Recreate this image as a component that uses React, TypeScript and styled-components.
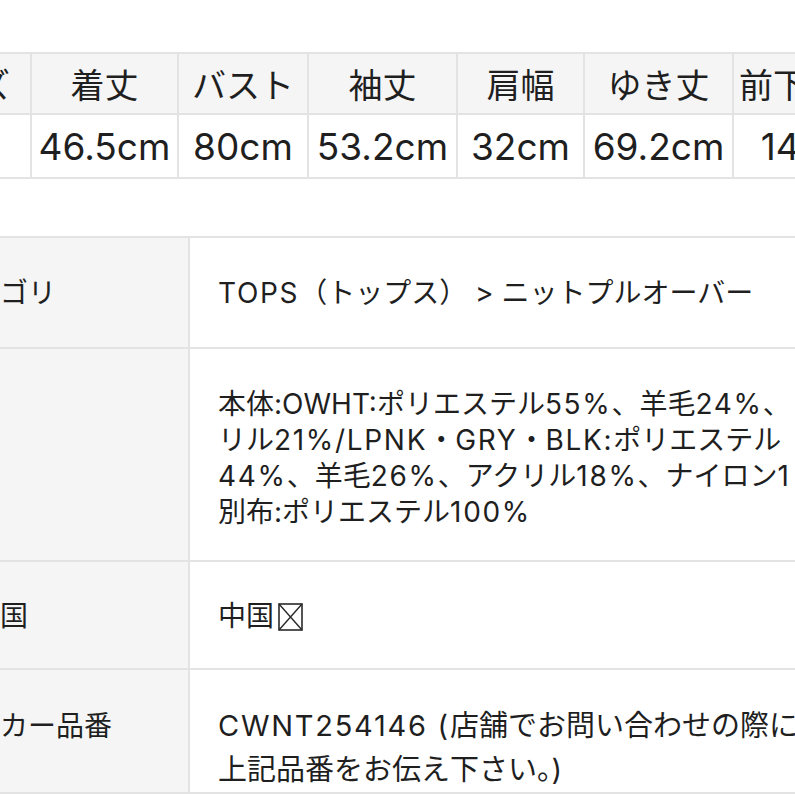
import React from "react";
import styled, { createGlobalStyle } from "styled-components";

const GlobalStyle = createGlobalStyle`
  html, body { margin: 0; padding: 0; background: #ffffff; }
  body {
    overflow: hidden;
    font-family: Inter, "Liberation Sans", "Noto Sans CJK JP", sans-serif;
    color: #1f1f1f;
  }
`;

const Page = styled.main`
  width: 795px;
  height: 795px;
  overflow: hidden;
  background: #fff;
  display: flex;
  flex-direction: column;
  align-items: flex-start;
  padding-top: 52px;
  box-sizing: border-box;
`;

const BORDER = "2px solid #e3e3e3";

const SizeTable = styled.table`
  flex: none;
  border-collapse: collapse;
  table-layout: fixed;
  width: 993px;
  margin-left: -113px;
`;

const SizeHead = styled.th`
  height: 59px;
  padding: 0;
  background: #f5f5f5;
  border: ${BORDER};
  font-weight: 400;
  font-size: 34px;
  text-align: center;
  white-space: nowrap;
`;

const SizeCell = styled.td`
  height: 62px;
  padding: 0;
  background: #fff;
  border: ${BORDER};
  font-size: 37px;
  text-align: center;
  white-space: nowrap;
`;

const DetailTable = styled.table`
  flex: none;
  border-collapse: collapse;
  table-layout: fixed;
  width: 957px;
  margin-left: -86px;
  margin-top: 57px;
`;

const LabelCell = styled.th<{ $h: number; $pt: number }>`
  height: ${(p) => p.$h}px;
  padding: ${(p) => p.$pt}px 28px 0;
  box-sizing: border-box;
  vertical-align: top;
  text-align: left;
  font-weight: 400;
  font-size: 28px;
  line-height: 36px;
  background: #f5f5f5;
  border: ${BORDER};
  white-space: nowrap;
`;

const ValueCell = styled.td<{ $pt: number; $lh: number; $fs?: number }>`
  padding: ${(p) => p.$pt}px 28px 0;
  vertical-align: top;
  text-align: left;
  font-size: ${(p) => p.$fs ?? 28}px;
  line-height: ${(p) => p.$lh}px;
  background: #fff;
  border: ${BORDER};
`;

const Line = styled.span`
  display: block;
  white-space: nowrap;
`;

const Latin = styled.span`
  letter-spacing: 0.06em;
`;

const Tofu = styled.svg`
  width: 25px;
  height: 28px;
  vertical-align: -5px;
  margin-left: 4px;
`;

const sizeHeads = ["サイズ", "着丈", "バスト", "袖丈", "肩幅", "ゆき丈", "前下がり"];
const sizeValues = ["", "46.5cm", "80cm", "53.2cm", "32cm", "69.2cm", "14cm"];
const colWidths = [143, 147, 130, 149, 127, 149, 148];

export default function App() {
  return (
    <>
      <GlobalStyle />
      <Page>
        <SizeTable>
          <colgroup>
            {colWidths.map((w, i) => (
              <col key={i} style={{ width: w }} />
            ))}
          </colgroup>
          <thead>
            <tr>
              {sizeHeads.map((h) => (
                <SizeHead key={h}>{h}</SizeHead>
              ))}
            </tr>
          </thead>
          <tbody>
            <tr>
              {sizeValues.map((v, i) => (
                <SizeCell key={i}>{v}</SizeCell>
              ))}
            </tr>
          </tbody>
        </SizeTable>

        <DetailTable>
          <colgroup>
            <col style={{ width: 274 }} />
            <col style={{ width: 683 }} />
          </colgroup>
          <tbody>
            <tr>
              <LabelCell $h={111} $pt={37}>カテゴリ</LabelCell>
              <ValueCell $pt={37} $lh={36}>
                <Line>
                  <Latin>TOPS</Latin>（トップス） &gt; ニットプルオーバー
                </Line>
              </ValueCell>
            </tr>
            <tr>
              <LabelCell $h={213} $pt={37}>素材</LabelCell>
              <ValueCell $pt={37} $lh={36}>
                <Line>
                  本体:OWHT:ポリエステル<Latin>55%</Latin>、羊毛<Latin>24%</Latin>、
                </Line>
                <Line>
                  リル<Latin>21%/LPNK</Latin>・<Latin>GRY</Latin>・<Latin>BLK:</Latin>ポリエステル
                </Line>
                <Line>
                  <Latin>44%</Latin>、羊毛<Latin>26%</Latin>、アクリル<Latin>18%</Latin>、ナイロン<Latin>1</Latin>
                </Line>
                <Line>
                  別布:ポリエステル<Latin>100%</Latin>
                </Line>
              </ValueCell>
            </tr>
            <tr>
              <LabelCell $h={108} $pt={36}>原産国</LabelCell>
              <ValueCell $pt={36} $lh={36}>
                <Line>
                  中国
                  <Tofu viewBox="0 0 25 28" aria-hidden="true">
                    <rect x="1" y="1" width="23" height="26" fill="none" stroke="#2a2a2a" strokeWidth="1.6" />
                    <path d="M1 1 L24 27 M24 1 L1 27" stroke="#2a2a2a" strokeWidth="1.4" />
                  </Tofu>
                </Line>
              </ValueCell>
            </tr>
            <tr>
              <LabelCell $h={124} $pt={38}>メーカー品番</LabelCell>
              <ValueCell $pt={34} $lh={44} $fs={29}>
                <Line>
                  <Latin>CWNT254146 (</Latin>店舗でお問い合わせの際に
                </Line>
                <Line>上記品番をお伝え下さい。)</Line>
              </ValueCell>
            </tr>
          </tbody>
        </DetailTable>
      </Page>
    </>
  );
}
